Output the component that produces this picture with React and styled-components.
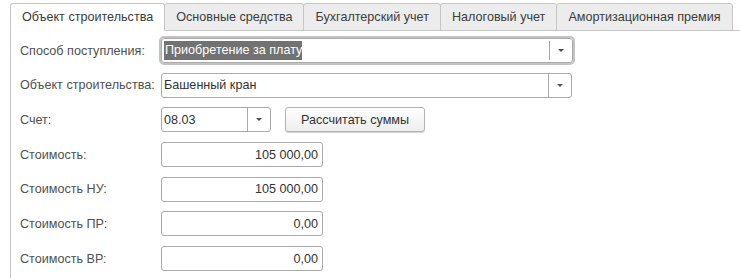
import styled, { createGlobalStyle } from "styled-components";

const GlobalStyle = createGlobalStyle`
  html, body {
    margin: 0;
    background: #ffffff;
    font-family: "Liberation Sans", Arial, sans-serif;
    font-size: 12.6px;
    color: #333333;
  }
`;

const tabs = [
  "Объект строительства",
  "Основные средства",
  "Бухгалтерский учет",
  "Налоговый учет",
  "Амортизационная премия",
];

const amounts = [
  { label: "Стоимость:", value: "105 000,00" },
  { label: "Стоимость НУ:", value: "105 000,00" },
  { label: "Стоимость ПР:", value: "0,00" },
  { label: "Стоимость ВР:", value: "0,00" },
];

const Arrow = () => (
  <svg width="6" height="3" viewBox="0 0 6 3">
    <path d="M0 0h6L3 3z" fill="#4d4d4d" />
  </svg>
);

const App = () => {
  return (
    <>
      <GlobalStyle />
      <Wrap>
        <TabBar>
          {tabs.map((t, i) => (
            <Tab key={t} $active={i === 0}>
              {t}
            </Tab>
          ))}
        </TabBar>
        <Panel>
          <Label>Способ поступления:</Label>
          <Combo $width={412} $focused>
            <ComboText>
              <Selected>Приобретение за плату</Selected>
            </ComboText>
            <DropButton $focused>
              <Arrow />
            </DropButton>
          </Combo>

          <Label>Объект строительства:</Label>
          <Combo $width={411}>
            <ComboText>Башенный кран</ComboText>
            <DropButton>
              <Arrow />
            </DropButton>
          </Combo>

          <Label>Счет:</Label>
          <Inline>
            <Combo $width={110}>
              <ComboText>08.03</ComboText>
              <DropButton>
                <Arrow />
              </DropButton>
            </Combo>
            <Button>Рассчитать суммы</Button>
          </Inline>

          {amounts.map((a) => (
            <Row key={a.label}>
              <Label>{a.label}</Label>
              <Amount>{a.value}</Amount>
            </Row>
          ))}
        </Panel>
      </Wrap>
    </>
  );
};

const Wrap = styled.div`
  padding: 3px 0 0 10px;
  height: 278px;
  box-sizing: border-box;
  display: flex;
  flex-direction: column;
`;

const TabBar = styled.div`
  display: flex;
  align-items: flex-end;
  border-bottom: 1px solid #c6c6c6;
  height: 28px;
  box-sizing: border-box;
`;

const Tab = styled.div`
  height: 28px;
  box-sizing: border-box;
  padding: 0 11px;
  margin-right: -1px;
  margin-bottom: -1px;
  display: flex;
  align-items: center;
  border: 1px solid #c6c6c6;
  border-bottom: ${(p) => (p.$active ? "1px solid #ffffff" : "1px solid #c6c6c6")};
  border-radius: 3px 3px 0 0;
  background: ${(p) => (p.$active ? "#ffffff" : "#ececec")};
  color: #3c3c3c;
  white-space: nowrap;
  position: relative;
  z-index: ${(p) => (p.$active ? 1 : 0)};
`;

const Panel = styled.div`
  flex: 1;
  border-left: 1px solid #c6c6c6;
  padding: 7px 0 0 9px;
  display: grid;
  grid-template-columns: 141px auto;
  grid-auto-rows: 25px;
  row-gap: 9.7px;
  align-items: center;
  justify-content: start;
`;

const Row = styled.div`
  display: contents;
`;

const Label = styled.div`
  color: #505050;
  white-space: nowrap;
`;

const Inline = styled.div`
  display: flex;
  align-items: center;
  gap: 14px;
`;

const Combo = styled.div`
  width: ${(p) => p.$width}px;
  height: 25px;
  box-sizing: border-box;
  display: flex;
  border: 1px solid #a9a9a9;
  border-radius: 3px;
  outline: ${(p) => (p.$focused ? "2px solid #c3c3c3" : "none")};
  background: #ffffff;
`;

const ComboText = styled.div`
  flex: 1;
  display: flex;
  align-items: center;
  padding-left: 2px;
  color: #333333;
  white-space: nowrap;
  overflow: hidden;
`;

const Selected = styled.span`
  background: #727272;
  color: #ffffff;
  padding: 2px 0 2px 1px;
  line-height: 15px;
`;

const DropButton = styled.div`
  width: 22px;
  display: flex;
  align-items: center;
  justify-content: center;
  border-left: 1px solid #a9a9a9;
  margin: ${(p) => (p.$focused ? "2px 0" : "0")};
`;

const Amount = styled.div`
  width: 162px;
  height: 25px;
  box-sizing: border-box;
  border: 1px solid #a9a9a9;
  border-radius: 3px;
  display: flex;
  align-items: center;
  justify-content: flex-end;
  padding-right: 4px;
  color: #333333;
`;

const Button = styled.div`
  width: 140px;
  height: 25px;
  box-sizing: border-box;
  border: 1px solid #b3b3b3;
  border-radius: 3px;
  background: linear-gradient(#ffffff, #ededed);
  box-shadow: 0 1px 1px rgba(0, 0, 0, 0.18);
  display: flex;
  align-items: center;
  justify-content: center;
  color: #333333;
`;

export default App;
